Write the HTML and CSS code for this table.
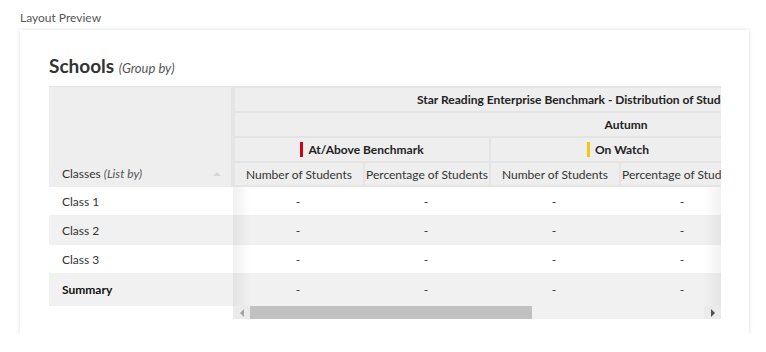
FILE: index.html
```html
<!DOCTYPE html>
<html>
<head>
    <link rel="stylesheet" href="styles.css">
</head>
<body>
    <div class="lp-label">Layout Preview</div>

    <div class="lp-card">
        <h2 class="lp-title">Schools <span class="lp-hint">(Group by)</span></h2>

        <div class="lp-table">
            <!-- fixed first column -->
            <div class="lp-fixed">
                <div class="lp-fixed-head">
                    <span>Classes <span class="lp-hint">(List by)</span></span>
                    <span class="lp-sort"></span>
                </div>
                <div class="lp-row lp-r1 lp-white"><div class="lp-name">Class 1</div></div>
                <div class="lp-row lp-r2 lp-grey"><div class="lp-name">Class 2</div></div>
                <div class="lp-row lp-r3 lp-white"><div class="lp-name">Class 3</div></div>
                <div class="lp-row lp-r4 lp-grey"><div class="lp-name lp-bold">Summary</div></div>
            </div>

            <!-- scrolling measures -->
            <div class="lp-scroll">
                <div class="lp-view">
                    <div class="lp-inner">
                        <div class="lp-hrow lp-h1">
                            <div class="lp-hcell lp-span-all lp-report">Star Reading Enterprise Benchmark - Distribution of Students</div>
                        </div>
                        <div class="lp-hrow lp-h2">
                            <div class="lp-hcell lp-span-all lp-season">Autumn</div>
                        </div>
                        <div class="lp-hrow lp-h3">
                            <div class="lp-hcell lp-group"><span class="lp-flag lp-red"></span>At/Above Benchmark</div>
                            <div class="lp-hcell lp-group"><span class="lp-flag lp-yellow"></span>On Watch</div>
                            <div class="lp-hcell lp-group"><span class="lp-flag lp-orange"></span>Intervention</div>
                        </div>
                        <div class="lp-hrow lp-h4" id="measureHead"></div>

                        <div id="bodyRows"></div>
                    </div>
                    <div class="lp-fade-left"></div>
                    <div class="lp-fade-right"></div>
                </div>

                <div class="lp-scrollbar">
                    <div class="lp-sb-btn"><span class="lp-arrow-left"></span></div>
                    <div class="lp-sb-track">
                        <div class="lp-sb-thumb"></div>
                    </div>
                    <div class="lp-sb-btn lp-sb-right"><span class="lp-arrow-right"></span></div>
                </div>
            </div>
        </div>
    </div>

    <script>
        // Two measures for each benchmark category
        const measures = ['Number of Students', 'Percentage of Students'];
        const groups = 3;
        const rows = [
            { cls: 'lp-r1 lp-white' },
            { cls: 'lp-r2 lp-grey' },
            { cls: 'lp-r3 lp-white' },
            { cls: 'lp-r4 lp-grey' }
        ];

        const measureHead = document.getElementById('measureHead');
        for (let g = 0; g < groups; g++) {
            measures.forEach((m, i) => {
                const cell = document.createElement('div');
                cell.className = 'lp-hcell lp-measure ' + (i === 0 ? 'lp-col-a' : 'lp-col-b');
                cell.textContent = m;
                measureHead.appendChild(cell);
            });
        }

        const bodyRows = document.getElementById('bodyRows');
        rows.forEach(r => {
            const row = document.createElement('div');
            row.className = 'lp-row ' + r.cls;
            for (let g = 0; g < groups; g++) {
                measures.forEach((m, i) => {
                    const cell = document.createElement('div');
                    cell.className = 'lp-cell ' + (i === 0 ? 'lp-col-a' : 'lp-col-b');
                    cell.textContent = '-';
                    row.appendChild(cell);
                });
            }
            bodyRows.appendChild(row);
        });
    </script>
</body>
</html>
```

FILE: styles.css
```css
body {
    margin: 0;
    font-family: 'Lato', 'Open Sans', sans-serif;
    font-size: 12px;
    color: #333;
    background: #fff;
}

.lp-label {
    padding: 10px 0 0 20px;
    height: 20px;
    line-height: 15px;
    color: #555;
}

.lp-card {
    margin-left: 20px;
    width: 729px;
    height: 304px;
    box-sizing: border-box;
    padding: 0 28px 0 29px;
    background: #fff;
    box-shadow: 0 0 4px rgba(0, 0, 0, 0.14);
}

.lp-title {
    margin: 0;
    padding-top: 25px;
    height: 31px;
    font-size: 19px;
    font-weight: bold;
    color: #333;
    line-height: 22px;
}

.lp-title .lp-hint {
    font-size: 13px;
    font-weight: normal;
}

.lp-hint {
    font-style: italic;
    color: #555;
}

.lp-table {
    display: flex;
}

/* first column */
.lp-fixed {
    width: 184px;
    flex-shrink: 0;
}

.lp-fixed-head {
    height: 101px;
    box-sizing: border-box;
    background: #eeeeee;
    border-right: 2px solid #e6e6e6;
    border-top: 1px solid #e4e4e4;
    display: flex;
    align-items: flex-end;
    justify-content: space-between;
    padding: 0 10px 6px 13px;
    color: #333;
}

.lp-sort {
    width: 0;
    height: 0;
    border-left: 4px solid transparent;
    border-right: 4px solid transparent;
    border-bottom: 4px solid #d6d6d6;
    margin-bottom: 5px;
}

.lp-row {
    display: flex;
    align-items: center;
}

.lp-r1 { height: 28px; }
.lp-r2 { height: 30px; }
.lp-r3 { height: 28px; }
.lp-r4 { height: 33px; }

.lp-white { background: #fff; }
.lp-grey { background: #f1f1f1; }

.lp-name {
    padding-left: 13px;
    color: #333;
}

.lp-bold {
    font-weight: bold;
    color: #111;
}

/* scrolling part */
.lp-scroll {
    width: 488px;
    flex-shrink: 0;
}

.lp-view {
    position: relative;
    overflow: hidden;
}

.lp-inner {
    width: 768px;
}

.lp-hrow {
    display: flex;
    height: 25px;
}

.lp-h4 {
    height: 26px;
}

.lp-hcell {
    box-sizing: border-box;
    background: #eeeeee;
    border-left: 2px solid #e4e4e4;
    border-top: 2px solid #e4e4e4;
    display: flex;
    align-items: center;
    justify-content: center;
    white-space: nowrap;
    color: #222;
}

.lp-h4 .lp-hcell {
    border-bottom: 2px solid #e4e4e4;
}

.lp-span-all {
    width: 768px;
    font-weight: bold;
}

.lp-report {
    justify-content: flex-start;
    padding-left: 182px;
}

.lp-season {
    padding-left: 16px;
}

.lp-group {
    width: 256px;
    font-weight: bold;
}

.lp-flag {
    width: 3px;
    height: 15px;
    margin-right: 5px;
}

.lp-red { background: #d0021b; }
.lp-yellow { background: #f5c518; }
.lp-orange { background: #f08a24; }

.lp-col-a { width: 130px; }
.lp-col-b { width: 126px; }

.lp-measure {
    color: #333;
}

.lp-cell {
    text-align: center;
    color: #333;
}

.lp-fade-left,
.lp-fade-right {
    position: absolute;
    top: 101px;
    bottom: 0;
    width: 18px;
}

.lp-fade-left {
    left: 0;
    background: linear-gradient(to right, rgba(0, 0, 0, 0.06), rgba(0, 0, 0, 0));
}

.lp-fade-right {
    right: 0;
    background: linear-gradient(to left, rgba(0, 0, 0, 0.05), rgba(0, 0, 0, 0));
}

/* horizontal scrollbar */
.lp-scrollbar {
    display: flex;
    height: 13px;
    background: #f1f1f1;
}

.lp-sb-btn {
    width: 17px;
    display: flex;
    align-items: center;
    justify-content: center;
    background: #ebebeb;
}

.lp-sb-track {
    flex: 1;
}

.lp-sb-thumb {
    width: 282px;
    height: 100%;
    background: #c1c1c1;
}

.lp-arrow-left {
    border-top: 4px solid transparent;
    border-bottom: 4px solid transparent;
    border-right: 4px solid #a3a3a3;
}

.lp-arrow-right {
    border-top: 4px solid transparent;
    border-bottom: 4px solid transparent;
    border-left: 4px solid #505050;
}
```
